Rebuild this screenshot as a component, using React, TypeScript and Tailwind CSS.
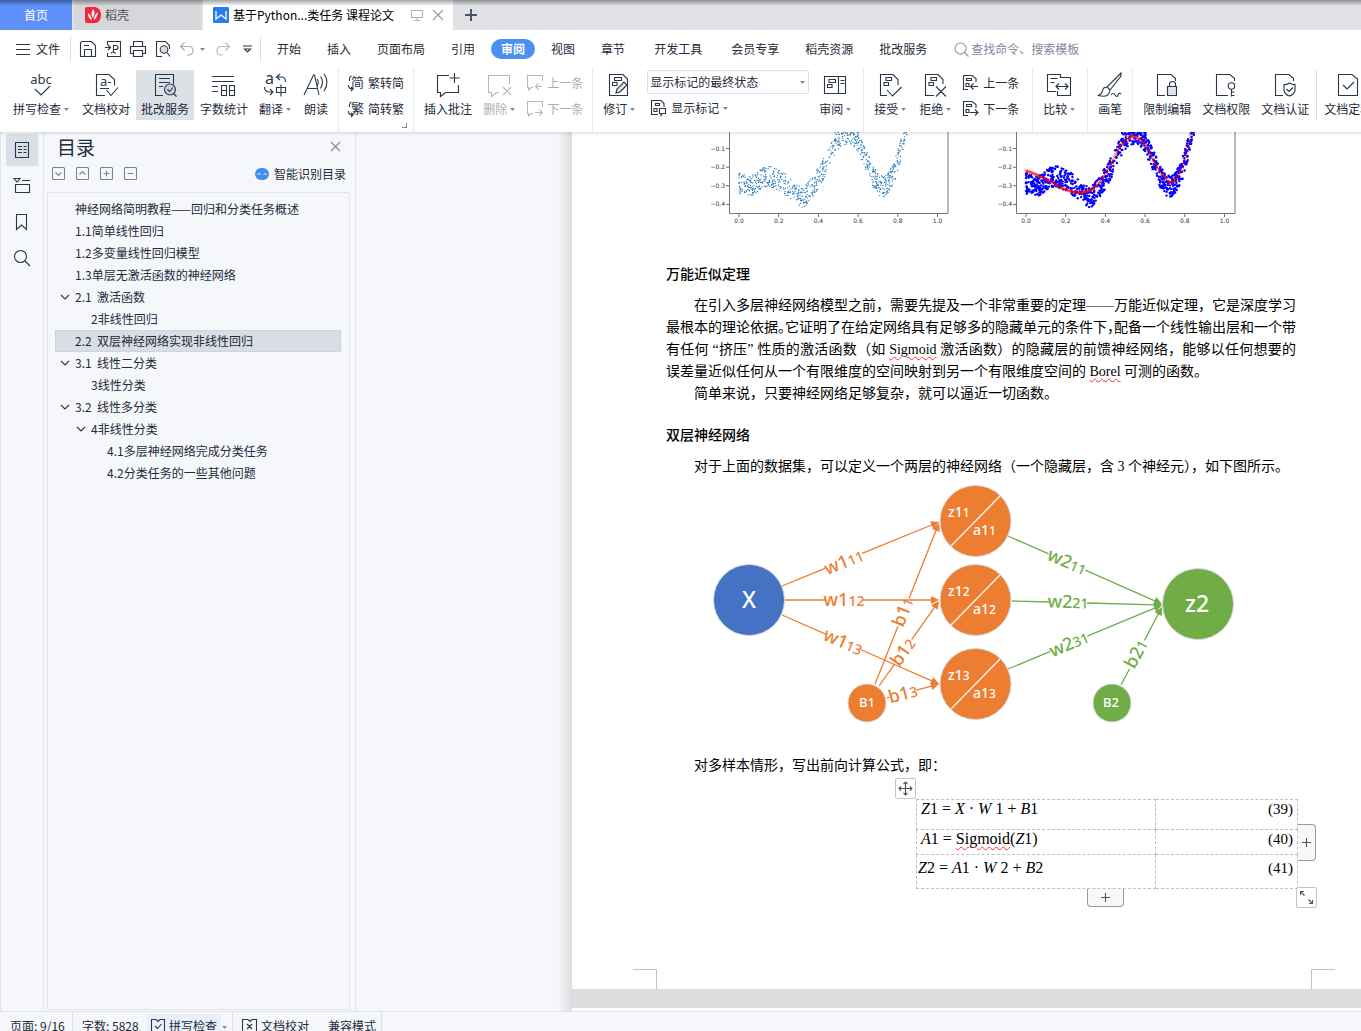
import type { ReactNode } from "react";
import clsx from "clsx";

const INK = "#2b3648";

function Svg({ w = 24, h = 24, children, color = INK }: { w?: number; h?: number; children: ReactNode; color?: string }) {
  return (
    <svg
      width={w}
      height={h}
      viewBox={`0 0 ${w} ${h}`}
      fill="none"
      stroke={color}
      strokeWidth={1.1}
      className="shrink-0 overflow-visible"
      aria-hidden="true"
    >
      {children}
    </svg>
  );
}

function Caret({ className }: { className?: string }) {
  return (
    <svg width="5" height="3" viewBox="0 0 5 3" className={clsx("shrink-0", className)} aria-hidden="true">
      <path d="M0 0h5L2.5 3z" fill="#7f8899" />
    </svg>
  );
}

const icons = {
  spell: (
    <Svg>
      <text x="12" y="11" textAnchor="middle" fontSize="13" fontFamily="Noto Sans" fill={INK} stroke="none">abc</text>
      <path d="M6 16l6 6 9-9" />
    </Svg>
  ),
  proof: (
    <Svg>
      <path d="M11 22.500H2.500v-21H15l5.500 5v6M12.500 17l4.500 5.500 7-8M6 15.500h9" />
      <text x="6" y="13" fontSize="13" fontFamily="Noto Sans" fill={INK} stroke="none">a-</text>
    </Svg>
  ),
  review: (
    <Svg>
      <path d="M10 22.500H2.500v-21h18v10M6 5.500h11M6 9.500h11M6 13.500h4" />
      <circle cx="17" cy="16.500" r="5.500" fill="#c6d0de" />
      <path d="M14.500 16.500l2 2 3.500-4M20.500 20.500l3 3" />
    </Svg>
  ),
  count: (
    <Svg>
      <path d="M0 3.500h22M0 8.500h22M0 13.500h6M0 18.500h6M9.500 12.500h5v10h-5zM9.500 17.500h5M17.500 12.500h5v10h-5zM17.500 17.500h5" />
    </Svg>
  ),
  translate: (
    <Svg>
      <text x="2" y="11" fontSize="16" fontFamily="Noto Sans" fill={INK} stroke="none">a</text>
      <path d="M17 1l-3.500 3L17 7M13.500 4h5q4 0 4 5M1.500 14q0 5 5 5h3M7 16l3 3-3 3" />
      <path d="M13.500 14.500h9v5h-9zM18 11.500v12" />
    </Svg>
  ),
  read: (
    <Svg>
      <path d="M0 22L9.500 2h1L15 22M3.500 15.500h10M13 6q2.500 3 0 7M16.500 3.500q4 5 0 12M20 1q6 8 0 17" />
    </Svg>
  ),
  addComment: (
    <Svg>
      <path d="M13 2.500H1.500v17h3v4l5-4h13V12M18.500 0v10M13.500 5h10" />
    </Svg>
  ),
  delComment: (
    <Svg color="#b4b8bf">
      <path d="M12 19.500H9.500l-5 4v-4h-3v-17h21V11M16 14l8 8M24 14l-8 8" />
    </Svg>
  ),
  revise: (
    <Svg>
      <path d="M20.500 8v14.500h-18v-21H16l4.500 4.500V9M7.500 4.500h7v3h-7zM5.500 9.500h4.500v3H5.500z" />
      <path d="M9 20l1-4 7-7 3 3-7 7z" fill="#dfe3ea" />
    </Svg>
  ),
  panel: (
    <Svg>
      <path d="M1.500 3.500h21v17h-21zM15.500 3.500v17M17.500 7.500h4M17.500 10.500h4M6 6.500h6.500v3H6zM4.500 11.500h4.500v3H4.500z" />
    </Svg>
  ),
  accept: (
    <Svg>
      <path d="M9 22.500H2.500v-21H15l5 5V12M8 4.500h5.500v3H8zM6 9.500h4.500v3H6zM9 17l5.500 6 9-9" />
    </Svg>
  ),
  reject: (
    <Svg>
      <path d="M11 22.500H2.500v-21H15l5 5V11M8 4.500h5.500v3H8zM6 9.500h4.500v3H6zM13 13.500l10 10M23 13.500l-10 10" />
    </Svg>
  ),
  compare: (
    <Svg>
      <path d="M9 18.500H.5v-17h13V5M3.500 5.500h7M3.500 9.500h4M13 4.500h10.500v18h-13V18M9 13.500h12M12 10.500l-3 3 3 3M18 10.500l3 3-3 3" />
    </Svg>
  ),
  brush: (
    <Svg>
      <path d="M23 0L9 14l3 3L23 3zM9 14q-4 0-4.500 4-1 3-4 4.500 8 2 10-1.500 1.500-2 1.500-4M13 22q2-3 4 0t3 0 3-1" />
    </Svg>
  ),
  lock: (
    <Svg>
      <path d="M10 22.500H2.500v-21H16l4.500 4V8M14.500 14v-3q0-2.500 3-2.500t3 2.500v3" />
      <path d="M12.500 13.500h9v9h-9z" fill="#dfe3ea" />
    </Svg>
  ),
  key: (
    <Svg>
      <path d="M14 22.500H2.500v-21H16l4.500 4V8M17.500 16v7.500M17.500 19h3M17.500 22.500h3" />
      <circle cx="17.500" cy="13" r="3.200" />
    </Svg>
  ),
  shield: (
    <Svg>
      <path d="M10 22.500H2.500v-21H16l4.500 4V8M16.500 10q3 2 5.500 1.500v6q-1 4-5.500 5.500-4.500-1.500-5.500-5.500v-6q3 .5 5.500-1.500zM13.500 16l2.500 2.500 4-4" />
    </Svg>
  ),
  final: (
    <Svg>
      <path d="M2.500 1.500H16l5.500 4.500v16.500h-19zM7 12l4 4 7-7" />
    </Svg>
  ),
};

const prevBlocks = (
  <Svg w={16} h={16}>
    <path d="M5 14.500H.5V.5H9l4 3V7M3.500 3.500h5v2h-5zM3 8.500h3v3H3zM15 11.500H8M10.500 8.500l-3 3 3 3" />
  </Svg>
);
const nextBlocks = (
  <Svg w={16} h={16}>
    <path d="M5 14.500H.5V.5H9l4 3V7M3.500 3.500h5v2h-5zM3 8.500h3v3H3zM7 11.500h7.500M12 8.500l3 3-3 3" />
  </Svg>
);
const prevComment = (
  <Svg w={16} h={16} color="#b4b8bf">
    <path d="M6 12.500H4.500L1.500 15v-2.500H.5V.5h15V6M15 11.500H8.500M11.500 8.500l-3 3 3 3" />
  </Svg>
);
const nextComment = (
  <Svg w={16} h={16} color="#b4b8bf">
    <path d="M6 12.500H4.500L1.500 15v-2.500H.5V.5h15V6M8 11.500h6.500M12.500 8.500l3 3-3 3" />
  </Svg>
);

function Convert({ char }: { char: string }) {
  return (
    <Svg w={16} h={16}>
      <text x="3" y="12" fontSize="13" fontFamily="Noto Sans CJK SC" fill={INK} stroke="none">{char}</text>
      <path d="M3.500 1Q1 2 1.500 6M.5 10q0 4 4 4M3 12l2 2-2 2" />
    </Svg>
  );
}

function Tool({ icon, label, caret, active, muted }: { icon: ReactNode; label: string; caret?: boolean; active?: boolean; muted?: boolean }) {
  return (
    <button
      className={clsx(
        "flex h-[50px] shrink-0 flex-col items-center gap-1 pt-[3px] pl-[5px]",
        caret ? "pr-[7px]" : "pr-[5px]",
        active && "bg-[#dce1e6]",
        muted && "text-[#a9adb5]"
      )}
    >
      {icon}
      <span className="flex items-center gap-[3px] whitespace-nowrap leading-4">
        {label}
        {caret && <Caret />}
      </span>
    </button>
  );
}

function SmallTool({ icon, label, caret, muted }: { icon: ReactNode; label: string; caret?: boolean; muted?: boolean }) {
  return (
    <button className={clsx("flex h-[26px] items-center gap-1 whitespace-nowrap", muted && "text-[#a9adb5]")}>
      {icon}
      {label}
      {caret && <Caret />}
    </button>
  );
}

function Divider() {
  return <div className="mx-1 -mt-[2px] w-px shrink-0 self-stretch bg-[#e8eaed]" />;
}

function TabBar() {
  return (
    <div className="relative flex h-[30px] shrink-0 bg-[#e1e2e6]">
      <button className="w-[72px] bg-[#5f8ff9] text-white">首页</button>
      <button className="ml-[2px] flex w-[127px] items-center gap-1 bg-[#d6d7da] pl-[11px] text-[#4a4f58]">
        <svg width="16" height="16" viewBox="0 0 16 16" aria-hidden="true">
          <path d="M2 0h8q6 1 6 8t-6 8H2q-2 0-2-2V2q0-2 2-2z" fill="#f5263b" />
          <path d="M8 2q3 3 0 9-3-4 0-9zM3 6q3 2 4 7-4-1-4-7zM13 5q-1 6-4 8 0-5 4-8z" fill="#fff" />
        </svg>
        稻壳
      </button>
      <div className="ml-[2px] flex w-[250px] items-center bg-white pl-[10px] text-black">
        <svg width="16" height="16" viewBox="0 0 16 16" className="mr-1 shrink-0" aria-hidden="true">
          <rect width="16" height="16" rx="1" fill="#2a7af0" />
          <path d="M3 4v8l5-4 5 4V4" fill="none" stroke="#fff" strokeWidth="1.300" />
        </svg>
        <span className="w-[178px] whitespace-nowrap">基于Python...类任务 课程论文</span>
        <button aria-label="在新窗口显示" className="mr-[9px]">
          <Svg w={12} h={12} color="#a9b1c4">
            <path d="M.5 1.500h11v7H.5zM6 8.500v3M3 11.500h6" />
          </Svg>
        </button>
        <button aria-label="关闭标签">
          <Svg w={12} h={12} color="#8f99b0">
            <path d="M1 1l10 10M11 1L1 11" />
          </Svg>
        </button>
      </div>
      <button aria-label="新建标签" className="ml-3">
        <svg width="12" height="12" viewBox="0 0 12 12" stroke="#47536b" strokeWidth="2" aria-hidden="true">
          <path d="M6 0v12M0 6h12" />
        </svg>
      </button>
      <div className="pointer-events-none absolute inset-x-0 top-0 h-[6px] bg-linear-to-b from-black/35 to-transparent" />
    </div>
  );
}

function MenuItem({ label, className }: { label: string; className?: string }) {
  return <button className={clsx("shrink-0 px-[13px]", className)}>{label}</button>;
}

function MenuBar() {
  return (
    <div className="flex h-[38px] shrink-0 items-center pl-4">
      <button className="flex items-center gap-[6px] pr-[10px]">
        <Svg w={14} h={12}>
          <path d="M0 1.500h14M0 6.500h14M0 11.500h14" />
        </Svg>
        文件
      </button>
      <div className="h-6 w-px bg-[#d9dce1]" />
      <div className="flex items-center gap-[9px] pr-2 pl-[9px]">
        <button aria-label="保存">
          <Svg w={16} h={16}>
            <path d="M.5 3q0-2.500 2-2.500h9l4 4v11H.5zM4.500 15V8.500h7V15M4 4.500h5" />
          </Svg>
        </button>
        <button aria-label="输出为PDF">
          <Svg w={16} h={16}>
            <path d="M2.500 4V.5h13v15h-13V12M0 6.500h5M3 4l2.500 2.500L3 9M8.500 12V4.500h2q2.500 0 2.500 2t-2.500 2h-2M6 12.500q1-3 5 0" />
          </Svg>
        </button>
        <button aria-label="打印">
          <Svg w={16} h={16}>
            <path d="M3.500 5V.5h9V5M3 12.500H.5v-7h15v7H13M3.500 9.500h9v6h-9z" />
          </Svg>
        </button>
        <button aria-label="打印预览">
          <Svg w={16} h={16}>
            <path d="M7 15.500H1.500V.5h9l4 4V8" />
            <circle cx="9" cy="8.500" r="3.800" fill="#d7dce5" />
            <path d="M12 11.500l3 4" />
          </Svg>
        </button>
        <button aria-label="撤销" className="flex items-center gap-[6px]">
          <Svg w={14} h={16} color="#a9adb5">
            <path d="M4.500 1.500l-4 4 4 4M.5 5.500H9q4 0 4 4t-4 4.500H7" />
          </Svg>
          <Caret />
        </button>
        <button aria-label="恢复" className="ml-[2px]">
          <Svg w={14} h={16} color="#b4b8bf">
            <path d="M9.500 1.500l4 4-4 4M13.500 5.500H5q-4 0-4 4t4 4.500h2" />
          </Svg>
        </button>
        <button aria-label="更多" className="ml-1">
          <Svg w={9} h={8}>
            <path d="M0 1h9M1.500 4L4.500 7l3-3z" />
          </Svg>
        </button>
      </div>
      <div className="h-6 w-px bg-[#d9dce1]" />
      <nav className="ml-[3px] flex items-center">
        <MenuItem label="开始" />
        <MenuItem label="插入" />
        <MenuItem label="页面布局" />
        <MenuItem label="引用" />
        <button className="mx-[3px] h-5 rounded-full bg-[#4a90f2] px-[10px] font-bold text-white">审阅</button>
        <MenuItem label="视图" />
        <MenuItem label="章节" />
        <MenuItem label="开发工具" className="ml-[3px]" />
        <MenuItem label="会员专享" className="ml-[3px]" />
        <MenuItem label="稻壳资源" />
        <MenuItem label="批改服务" />
      </nav>
      <label className="ml-[14px] flex items-center gap-[2px]">
        <Svg w={15} h={15} color="#8b94a8">
          <circle cx="6.500" cy="6.500" r="5.500" />
          <path d="M10.500 10.500l4 4" />
        </Svg>
        <input aria-label="搜索" placeholder="查找命令、搜索模板" className="w-[130px] outline-none placeholder:text-[#8089a0]" />
      </label>
    </div>
  );
}

function Ribbon() {
  return (
    <div className="flex h-16 shrink-0 items-start gap-px pt-[2px] pl-2">
      <Tool icon={icons.spell} label="拼写检查" caret />
      <Tool icon={icons.proof} label="文档校对" />
      <Tool icon={icons.review} label="批改服务" active />
      <Tool icon={icons.count} label="字数统计" />
      <Tool icon={icons.translate} label="翻译" caret />
      <Tool icon={icons.read} label="朗读" />
      <Divider />
      <div className="relative shrink-0 self-stretch px-1">
        <SmallTool icon={<Convert char="简" />} label="繁转简" />
        <SmallTool icon={<Convert char="繁" />} label="简转繁" />
        <i className="absolute right-px bottom-1 size-[5px] border-r border-b border-[#7f8899]" />
      </div>
      <Divider />
      <Tool icon={icons.addComment} label="插入批注" />
      <Tool icon={icons.delComment} label="删除" caret muted />
      <div className="shrink-0 px-1">
        <SmallTool icon={prevComment} label="上一条" muted />
        <SmallTool icon={nextComment} label="下一条" muted />
      </div>
      <Divider />
      <Tool icon={icons.revise} label="修订" caret />
      <div className="shrink-0 px-1">
        <div className="relative">
          <select aria-label="显示状态" className="h-6 w-[162px] appearance-none rounded-xs border border-[#dcdfe5] bg-white pl-[2px]">
            <option>显示标记的最终状态</option>
            <option>最终状态</option>
            <option>显示标记的原始状态</option>
            <option>原始状态</option>
          </select>
          <Caret className="pointer-events-none absolute top-[11px] right-1" />
        </div>
        <div className="mt-px ml-1">
          <SmallTool
            icon={
              <Svg w={16} h={16}>
                <path d="M7 14.500H.5V.5H10l3 3V7M4.500 3.500h4v2h-4zM3 8.500h3v3H3z" />
                <path d="M8.500 8.500h6v5h-3l-1.500 2v-2H8.500z" fill="#fff" />
              </Svg>
            }
            label="显示标记"
            caret
          />
        </div>
      </div>
      <Tool icon={icons.panel} label="审阅" caret />
      <Divider />
      <Tool icon={icons.accept} label="接受" caret />
      <Tool icon={icons.reject} label="拒绝" caret />
      <div className="shrink-0 pr-2 pl-1">
        <SmallTool icon={prevBlocks} label="上一条" />
        <SmallTool icon={nextBlocks} label="下一条" />
      </div>
      <Divider />
      <Tool icon={icons.compare} label="比较" caret />
      <Divider />
      <Tool icon={icons.brush} label="画笔" />
      <Divider />
      <Tool icon={icons.lock} label="限制编辑" />
      <Tool icon={icons.key} label="文档权限" />
      <Tool icon={icons.shield} label="文档认证" />
      <div className="mx-px h-[50px] w-px shrink-0 bg-[#d9dce1]" />
      <Tool icon={icons.final} label="文档定稿" />
    </div>
  );
}

function SideStrip() {
  return (
    <div className="flex w-11 shrink-0 flex-col gap-1 border-x border-[#e1e4ea] pt-[2px] pl-[5px]">
      <button aria-label="目录" className="flex size-8 items-center justify-center rounded-xs bg-[#dae0e8]">
        <Svg w={16} h={16}>
          <path d="M1.500.5h13v15h-13zM4 4.500h4M4 7.500h4M4 10.500h4M9.500 4.500h3M9.500 7.500h3M9.500 10.500h3" />
        </Svg>
      </button>
      <button aria-label="章节" className="flex size-8 items-center justify-center">
        <Svg w={16} h={16}>
          <path d="M0 .5h6L3 4zM8 2.500h8M1.500 14.500v-8h14v8z" />
        </Svg>
      </button>
      <button aria-label="书签" className="flex size-8 items-center justify-center">
        <Svg w={16} h={16}>
          <path d="M2.500.5h10v15l-5-4.500-5 4.500z" />
        </Svg>
      </button>
      <button aria-label="查找" className="flex size-8 items-center justify-center">
        <Svg w={16} h={16}>
          <circle cx="6.500" cy="6.500" r="6" />
          <path d="M11 11l5 5" />
        </Svg>
      </button>
    </div>
  );
}

const outline = [
  { level: 1, text: "神经网络简明教程——回归和分类任务概述" },
  { level: 1, text: "1.1简单线性回归" },
  { level: 1, text: "1.2多变量线性回归模型" },
  { level: 1, text: "1.3单层无激活函数的神经网络" },
  { level: 1, text: "2.1  激活函数", open: true },
  { level: 2, text: "2非线性回归" },
  { level: 1, text: "2.2  双层神经网络实现非线性回归", selected: true },
  { level: 1, text: "3.1  线性二分类", open: true },
  { level: 2, text: "3线性分类" },
  { level: 1, text: "3.2  线性多分类", open: true },
  { level: 2, text: "4非线性分类", open: true },
  { level: 3, text: "4.1多层神经网络完成分类任务" },
  { level: 3, text: "4.2分类任务的一些其他问题" },
];

const outlineTools = [
  { name: "展开", d: "M3.500 5.500l3 3 3-3" },
  { name: "收起", d: "M3.500 7.500l3-3 3 3" },
  { name: "放大", d: "M3.500 6.500h6M6.500 3.500v6" },
  { name: "缩小", d: "M3.500 6.500h6" },
];

function OutlinePanel() {
  return (
    <aside className="flex w-[312px] shrink-0 flex-col border-r border-[#e1e4ea] pr-[5px] pb-px pl-[3px]">
      <div className="flex h-[29px] shrink-0 items-center justify-between pr-[9px] pl-[10px]">
        <h2 className="text-[19px]">目录</h2>
        <button aria-label="关闭目录">
          <Svg w={11} h={11} color="#7f8899">
            <path d="M1 1l9 9M10 1l-9 9" />
          </Svg>
        </button>
      </div>
      <div className="flex h-[31px] shrink-0 items-center gap-[11px] pr-1 pb-[6px] pl-[5px]">
        {outlineTools.map((tool) => (
          <button key={tool.name} aria-label={tool.name}>
            <Svg w={13} h={13} color="#7b8494">
              <rect x=".5" y=".5" width="12" height="12" rx="1" />
              <path d={tool.d} />
            </Svg>
          </button>
        ))}
        <button className="ml-auto flex items-center gap-[5px]">
          <svg width="14" height="12" viewBox="0 0 14 12" aria-hidden="true">
            <rect width="14" height="12" rx="6" fill="#3f8ff0" />
            <path d="M2.500 6.500q1.500-2 3 0M8.500 6.500q1.500-2 3 0" stroke="#fff" fill="none" />
          </svg>
          智能识别目录
        </button>
      </div>
      <ul className="flex-1 rounded-xs border border-[#e1e4ea] py-[5px] pr-2 pl-[7px]">
        {outline.map((item) => (
          <li
            key={item.text}
            className={clsx(
              "flex h-[22px] items-center border whitespace-pre",
              item.selected ? "border-[#cfd5de] bg-[#d9dee6]" : "border-transparent",
              item.level === 1 && "pl-1",
              item.level === 2 && "pl-5",
              item.level === 3 && "pl-9"
            )}
          >
            <span className="w-[15px]">
              {item.open && (
                <Svg w={10} h={6}>
                  <path d="M1 1l4 4 4-4" />
                </Svg>
              )}
            </span>
            {item.text}
          </li>
        ))}
      </ul>
    </aside>
  );
}

type Pt = [number, number];

// [x, y] of the sample band's centre and of the fitted curve
const band: Pt[] = [[0, -0.285], [0.06, -0.295], [0.14, -0.25], [0.21, -0.275], [0.27, -0.32], [0.32, -0.36], [0.38, -0.29], [0.44, -0.18], [0.49, -0.06], [0.54, -0.02], [0.59, -0.05], [0.64, -0.16], [0.69, -0.275], [0.73, -0.3], [0.78, -0.23], [0.82, -0.09], [0.85, 0.04]];
const fit: Pt[] = [[0, -0.22], [0.1, -0.265], [0.2, -0.32], [0.28, -0.335], [0.35, -0.305], [0.42, -0.2], [0.48, -0.08], [0.54, -0.035], [0.6, -0.08], [0.66, -0.2], [0.73, -0.28], [0.78, -0.22], [0.82, -0.08], [0.85, 0.04]];

function sample(pts: Pt[], x: number) {
  let i = 0;
  while (i < pts.length - 2 && x > pts[i + 1][0]) i++;
  const p1 = pts[i];
  const p2 = pts[i + 1];
  const p0 = pts[i - 1] ?? p1;
  const p3 = pts[i + 2] ?? p2;
  const t = (x - p1[0]) / (p2[0] - p1[0]);
  return (
    0.5 *
    (2 * p1[1] +
      (p2[1] - p0[1]) * t +
      (2 * p0[1] - 5 * p1[1] + 4 * p2[1] - p3[1]) * t * t +
      (3 * p1[1] - p0[1] - 3 * p2[1] + p3[1]) * t * t * t)
  );
}

function makeScatter(count: number) {
  let seed = 7;
  const rand = () => {
    seed = (seed * 16807) % 2147483647;
    return seed / 2147483647;
  };
  return Array.from({ length: count }, () => {
    const x = rand() * 0.85;
    return [x, sample(band, x) + (rand() - 0.5) * 0.115] as Pt;
  });
}

const scatter = makeScatter(850);

function Plot({ fitted }: { fitted?: boolean }) {
  const px = (x: number) => 40 + x * 198.5;
  const py = (y: number) => -2 - y * 186;
  return (
    <svg width="260" height="98" viewBox="0 0 260 98" className="shrink-0" aria-hidden="true">
      {scatter.map(([x, y], i) =>
        fitted ? (
          <circle key={i} cx={px(x)} cy={py(y)} r="1.200" fill="#0000ff" />
        ) : (
          <circle key={i} cx={px(x)} cy={py(y)} r=".65" fill="#1f77b4" />
        )
      )}
      {fitted &&
        Array.from({ length: 140 }, (_, i) => {
          const x = i * 0.0061;
          return (
            <path
              key={i}
              d={`M${px(x) - 1.5} ${py(sample(fit, x)) - 1.5}l3 3m0-3l-3 3`}
              stroke="#ff0000"
              strokeWidth=".6"
            />
          );
        })}
      <path d="M30.500 0v81.500h218.500V0" fill="none" stroke="#777" />
      <g fontFamily="DejaVu Sans" fontSize="6" fill="#333">
        {[0, 0.2, 0.4, 0.6, 0.8, 1].map((v) => (
          <g key={v}>
            <path d={`M${px(v)} 82v3`} stroke="#444" strokeWidth=".8" />
            <text x={px(v)} y="91" textAnchor="middle">{v.toFixed(1)}</text>
          </g>
        ))}
        {[0, -0.1, -0.2, -0.3, -0.4].map((v) => (
          <g key={v}>
            <path d={`M27 ${py(v)}h3`} stroke="#444" strokeWidth=".8" />
            <text x="26" y={py(v) + 2} textAnchor="end">{v.toFixed(1).replace("-", "−")}</text>
          </g>
        ))}
      </g>
    </svg>
  );
}

const ORANGE = "#ed7d31";
const GREEN = "#70ad47";

type Edge = { from: Pt; to: Pt; at: Pt; gap: number; name: string; sub: string; color: string };

const edges: Edge[] = [
  { from: [82, 106], to: [239, 42], at: [144, 82], gap: 20, name: "w1", sub: "11", color: ORANGE },
  { from: [85, 120], to: [239, 120], at: [144, 120], gap: 19, name: "w1", sub: "12", color: ORANGE },
  { from: [82, 135], to: [239, 204], at: [143, 162], gap: 19, name: "w1", sub: "13", color: ORANGE },
  { from: [175, 204], to: [239, 43], at: [203, 132], gap: 15, name: "b1", sub: "1", color: ORANGE },
  { from: [179, 206], to: [239, 121], at: [203, 172], gap: 15, name: "b1", sub: "2", color: ORANGE },
  { from: [187, 218], to: [239, 204], at: [203, 214], gap: 14, name: "b1", sub: "3", color: ORANGE },
  { from: [308, 56], to: [462, 124], at: [367, 82], gap: 20, name: "w2", sub: "11", color: GREEN },
  { from: [312, 121], to: [462, 125], at: [368, 122], gap: 19, name: "w2", sub: "21", color: GREEN },
  { from: [308, 189], to: [462, 125], at: [369, 164], gap: 20, name: "w2", sub: "31", color: GREEN },
  { from: [421, 205], to: [462, 127], at: [436, 174], gap: 16, name: "b2", sub: "1", color: GREEN },
];

function EdgeLine({ from, to, at, gap, name, sub, color }: Edge) {
  const len = Math.hypot(to[0] - from[0], to[1] - from[1]);
  const ux = (to[0] - from[0]) / len;
  const uy = (to[1] - from[1]) / len;
  const mid = (at[0] - from[0]) * ux + (at[1] - from[1]) * uy;
  const angle = (Math.atan2(uy, ux) * 180) / Math.PI;
  return (
    <g stroke={color} fill={color}>
      <g transform={`translate(${from[0]} ${from[1]}) rotate(${angle})`}>
        <path d={`M0 0H${mid - gap}M${mid + gap} 0H${len - 6}`} strokeWidth="1.300" fill="none" />
        <path d={`M${len} 0l-8-4v8z`} stroke="none" />
      </g>
      <text
        transform={`translate(${at[0]} ${at[1]}) rotate(${angle})`}
        y="6"
        textAnchor="middle"
        fontSize="18"
        fontWeight="500"
        stroke="none"
      >
        {name}
        <tspan fontSize="14">{sub}</tspan>
      </text>
    </g>
  );
}

function Network() {
  return (
    <svg width="560" height="250" viewBox="0 0 560 250" fontFamily="Noto Sans" className="ml-[34px]" role="img" aria-label="双层神经网络结构图">
      {edges.map((edge) => (
        <EdgeLine key={edge.name + edge.sub} {...edge} />
      ))}
      <g stroke="#d5d8dc">
        <circle cx="49" cy="120" r="35.500" fill="#4472c4" />
        <circle cx="498" cy="124" r="35.500" fill={GREEN} />
        <circle cx="167" cy="223" r="19" fill={ORANGE} />
        <circle cx="412" cy="223" r="19" fill={GREEN} />
      </g>
      {[41, 120, 204].map((cy, i) => (
        <g key={cy}>
          <circle cx="275.500" cy={cy} r="35.500" fill={ORANGE} stroke="#d5d8dc" />
          <path d={`M251 ${cy + 25}l49-50`} stroke="#fdf0e6" strokeWidth="1.500" />
          <g fill="#fff" fontSize="14" fontWeight="500">
            <text x="248" y={cy - 4}>z1<tspan fontSize="12">{i + 1}</tspan></text>
            <text x="273" y={cy + 14}>a1<tspan fontSize="12">{i + 1}</tspan></text>
          </g>
        </g>
      ))}
      <g fill="#fff" textAnchor="middle" fontWeight="500">
        <text x="49" y="128" fontSize="23">X</text>
        <text x="497" y="132" fontSize="23">z2</text>
        <text x="167" y="227" fontSize="13">B1</text>
        <text x="411" y="227" fontSize="13">B2</text>
      </g>
    </svg>
  );
}

function Misspelled({ children }: { children: ReactNode }) {
  return <span className="underline decoration-red-500 decoration-wavy decoration-1 underline-offset-2">{children}</span>;
}

/* full-width punctuation set to half its width */
function Half({ children }: { children: ReactNode }) {
  return <span className="[font-feature-settings:'halt']">{children}</span>;
}

function Line({ children, indent, full }: { children: ReactNode; indent?: boolean; full?: boolean }) {
  return (
    <span className={clsx("block h-[22px] w-[630px] whitespace-nowrap", indent && "pl-7", full && "[text-align-last:justify]")}>
      {children}
    </span>
  );
}

function FormulaTable() {
  const cell = "border border-dashed border-[#bfbfbf] align-top";
  return (
    <div className="relative mt-[22px] ml-[250px] w-[382px]">
      <table className="w-full border-collapse font-['Liberation_Serif',serif] text-base leading-[18px]">
        <tbody>
          <tr className="h-[30px]">
            <td className={clsx(cell, "w-[239px] pl-1")}><i>Z</i>1 = <i>X</i> · <i>W</i> 1 + <i>B</i>1</td>
            <td className={clsx(cell, "pr-1 text-right text-[15px]")}>(39)</td>
          </tr>
          <tr className="h-[25px]">
            <td className={clsx(cell, "pl-1")}><i>A</i>1 = <Misspelled>Sigmoid</Misspelled>(<i>Z</i>1)</td>
            <td className={clsx(cell, "pr-1 text-right text-[15px]")}>(40)</td>
          </tr>
          <tr className="h-[34px]">
            <td className={clsx(cell, "pt-1 pl-px")}><i>Z</i>2 = <i>A</i>1 · <i>W</i> 2 + <i>B</i>2</td>
            <td className={clsx(cell, "pt-1 pr-1 text-right text-[15px]")}>(41)</td>
          </tr>
        </tbody>
      </table>
      <button aria-label="移动表格" className="absolute -top-[21px] -left-[21px] flex size-[21px] items-center justify-center rounded-xs border border-[#c4c4c4] bg-white">
        <Svg w={15} h={15} color="#555">
          <path d="M7.500 1v13M1 7.500h13M5.500 3l2-2 2 2M5.500 12l2 2 2-2M3 5.500l-2 2 2 2M12 5.500l2 2-2 2" />
        </Svg>
      </button>
      <button aria-label="添加列" className="absolute top-[25px] -right-[18px] flex h-[37px] w-[18px] items-center justify-center rounded-r-sm border border-l-0 border-[#999] bg-[#f8f8f8]">
        <Svg w={9} h={9} color="#555">
          <path d="M4.500 0v9M0 4.500h9" />
        </Svg>
      </button>
      <button aria-label="添加行" className="absolute top-[90px] left-[171px] flex h-[18px] w-[37px] items-center justify-center rounded-b-sm border border-t-0 border-[#999] bg-[#f8f8f8]">
        <Svg w={9} h={9} color="#555">
          <path d="M4.500 0v9M0 4.500h9" />
        </Svg>
      </button>
      <button aria-label="调整大小" className="absolute -right-[19px] top-[88px] flex size-[21px] items-center justify-center rounded-xs border border-[#c4c4c4] bg-white">
        <Svg w={15} h={15} color="#555">
          <path d="M1.500 5V1.500H5M1.500 1.500l4 4M13.500 10v3.500H10M13.500 13.500l-4-4" />
        </Svg>
      </button>
    </div>
  );
}

function Page() {
  return (
    <main className="flex min-w-0 flex-1 flex-col overflow-hidden bg-[#dcdddf]">
      <article className="flex flex-1 flex-col bg-white text-sm leading-[22px] text-black">
        <div className="pl-[94px] font-['Liberation_Serif','Noto_Sans_CJK_SC',serif]">
          <div className="ml-[33px] flex gap-[27px]">
            <Plot />
            <Plot fitted />
          </div>
          <h3 className="mt-[34px] font-medium">万能近似定理</h3>
          <p className="mt-[9px]">
            <Line indent>在引入多层神经网络模型之前，需要先提及一个非常重要的定理——万能近似定理，它是深度学习</Line>
            <Line>最根本的理论依据<Half>。</Half>它证明了在给定网络具有足够多的隐藏单元的条件下<Half>，</Half>配备一个线性输出层和一个带</Line>
            <Line full>有任何 “挤压” 性质的激活函数（如 <Misspelled>Sigmoid</Misspelled> 激活函数）的隐藏层的前馈神经网络，能够以任何想要的</Line>
            <Line>误差量近似任何从一个有限维度的空间映射到另一个有限维度空间的 <Misspelled>Borel</Misspelled> 可测的函数。</Line>
          </p>
          <p>
            <Line indent>简单来说，只要神经网络足够复杂，就可以逼近一切函数。</Line>
          </p>
          <h3 className="mt-5 font-medium">双层神经网络</h3>
          <p className="mt-[9px]">
            <Line indent>对于上面的数据集，可以定义一个两层的神经网络（一个隐藏层，含 3 个神经元<Half>）</Half>，如下图所示。</Line>
          </p>
          <div className="mt-[2px] flex">
            <Network />
          </div>
          <p className="mt-[25px]">
            <Line indent>对多样本情形，写出前向计算公式，即：</Line>
          </p>
          <FormulaTable />
        </div>
        <div className="mt-auto flex justify-between pr-[26px] pl-[61px]">
          <div className="h-5 w-6 border-t border-r border-[#c4c4c4]" />
          <div className="h-5 w-6 border-t border-l border-[#c4c4c4]" />
        </div>
      </article>
      <div className="mt-[19px] h-[3px] shrink-0 bg-white" />
    </main>
  );
}

function StatusBar() {
  return (
    <footer className="flex h-5 shrink-0 items-start overflow-hidden border-t border-[#e1e4ea] pl-[10px] leading-7 whitespace-nowrap">
      <span className="w-[62px]">页面: 9/16</span>
      <span className="w-[75px] border-l border-[#dcdfe5] pl-[9px]">字数: 5828</span>
      <button className="mt-[2px] flex h-6 items-center gap-1 bg-[#e8f0fb] px-1">
        <Svg w={14} h={14}>
          <path d="M5 .5H.5v13h13V.5H9l-2 2-2-2zM4 7l2.500 2.500L10.500 5" />
        </Svg>
        拼写检查
      </button>
      <Caret className="mt-[14px] ml-px" />
      <button className="ml-[5px] flex h-7 items-center gap-1 border-l border-[#dcdfe5] pl-[9px]">
        <Svg w={15} h={14}>
          <path d="M5 .5H.5v13h14V.5H10l-2 2-2-2zM5 5l5 5M10 5l-5 5" />
        </Svg>
        文档校对
      </button>
      <span className="ml-[19px] border-r border-[#dcdfe5] pr-[5px]">兼容模式</span>
    </footer>
  );
}

export default function App() {
  return (
    <div className="flex h-screen flex-col overflow-hidden bg-white font-['Noto_Sans_CJK_SC',sans-serif] text-xs text-[#232b3a]">
      <TabBar />
      <MenuBar />
      <Ribbon />
      <div className="relative flex min-h-0 flex-1 bg-[#f5f7fa]">
        <SideStrip />
        <OutlinePanel />
        <div className="flex w-[216px] shrink-0 justify-end">
          <div className="w-[14px] bg-linear-to-r from-transparent to-[#dcdddf]" />
        </div>
        <Page />
        <div className="pointer-events-none absolute inset-x-0 top-0 h-1 bg-linear-to-b from-black/10 to-transparent" />
      </div>
      <div className="shrink-0 bg-[#f5f7fa]">
        <StatusBar />
      </div>
    </div>
  );
}
